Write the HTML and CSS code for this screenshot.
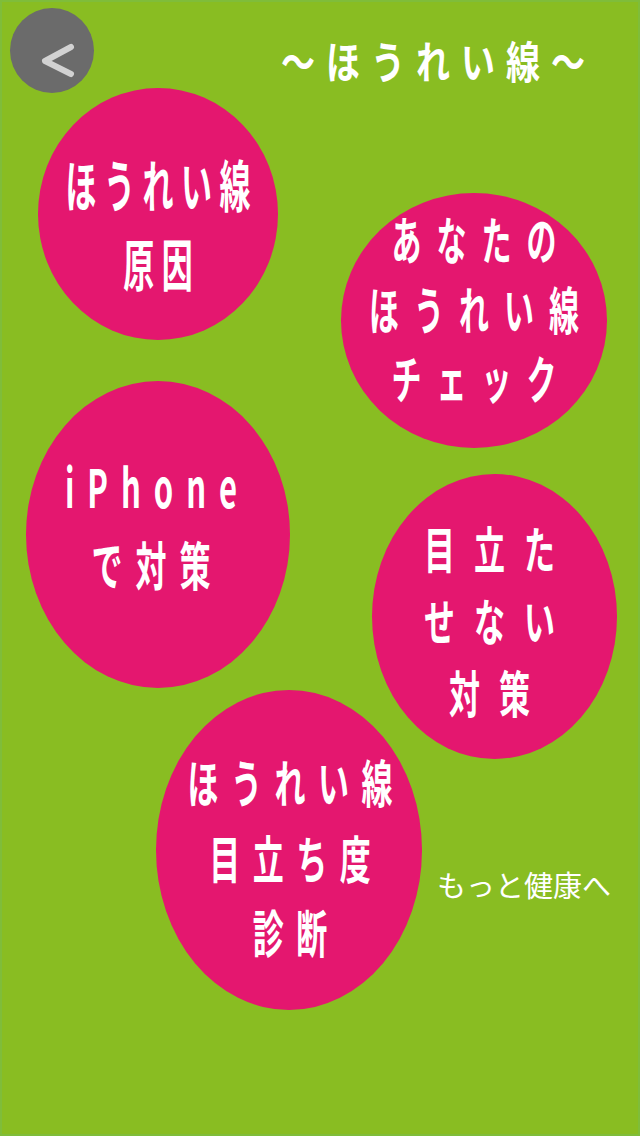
FILE: index.html
```html
<!DOCTYPE html>
<html lang="ja">
<head>
<meta charset="utf-8">
<title>ほうれい線</title>
<link rel="stylesheet" href="styles.css">
</head>
<body>
<div class="screen">
  <header class="header">
    <button class="back" type="button" aria-label="戻る">
      <svg viewBox="0 0 84 85" width="84" height="85">
        <polyline points="61,39 35,53 61,66" fill="none" stroke="#d2d2d2" stroke-width="6" stroke-linecap="round" stroke-linejoin="round"/>
      </svg>
    </button>
    <h1 class="title">～ほうれい線～</h1>
  </header>
  <main class="canvas">
    <a class="bubble b1" href="#"><span class="label">ほうれい線<br>原因</span></a>
    <a class="bubble b2" href="#"><span class="label">あなたの<br>ほうれい線<br>チェック</span></a>
    <a class="bubble b3" href="#"><span class="label">iPhone<br>で対策</span></a>
    <a class="bubble b4" href="#"><span class="label">目立た<br>せない<br>対策</span></a>
    <a class="bubble b5" href="#"><span class="label">ほうれい線<br>目立ち度<br>診断</span></a>
    <a class="more" href="#">もっと健康へ</a>
  </main>
</div>
</body>
</html>
```
FILE: styles.css
```css
html, body {
  margin: 0;
  padding: 0;
}
body {
  width: 640px;
  height: 1136px;
  overflow: hidden;
  background: #89bd22;
  font-family: "Noto Sans CJK JP", "Noto Sans", sans-serif;
  color: #ffffff;
}
.screen {
  width: 640px;
  height: 1136px;
  box-sizing: border-box;
  box-shadow: inset 0 0 0 2px #7fbd3a;
  display: flex;
  flex-direction: column;
}
.header {
  height: 88px;
  display: flex;
  align-items: flex-start;
  flex-shrink: 0;
}
.back {
  width: 84px;
  height: 85px;
  margin: 8px 0 0 10px;
  padding: 0;
  border: none;
  border-radius: 50%;
  background: #6b6b6b;
  display: flex;
  align-items: center;
  justify-content: center;
  position: relative;
  z-index: 2;
}
.back svg {
  display: block;
}
.title {
  margin: 40px 44px 0 auto;
  font-size: 34px;
  font-weight: 700;
  line-height: 42px;
  letter-spacing: 11px;
  transform: scale(1, 1.3);
  white-space: nowrap;
}
.canvas {
  position: relative;
  flex: 1;
}
.bubble {
  position: absolute;
  border-radius: 50%;
  background: #e4176f;
  color: #ffffff;
  text-decoration: none;
  display: flex;
  align-items: center;
  justify-content: center;
}
.label {
  display: block;
  text-align: center;
  white-space: nowrap;
  font-weight: 700;
  font-size: var(--fs);
  line-height: var(--lh);
  letter-spacing: var(--ls);
  padding-left: var(--ls);
  transform: translate(var(--dx), var(--dy)) scale(1, var(--s));
}
.b1 {
  left: 38px; top: 0; width: 240px; height: 252px;
  --fs: 31px; --lh: 44px; --ls: 7.5px; --s: 1.8; --dx: 0px; --dy: 9px;
}
.b2 {
  left: 341px; top: 105px; width: 266px; height: 255px;
  --fs: 30px; --lh: 41px; --ls: 15px; --s: 1.7; --dx: 0px; --dy: -12px;
}
.b3 {
  left: 26px; top: 293px; width: 264px; height: 307px;
  --fs: 31px; --lh: 46px; --ls: 13px; --s: 1.7; --dx: -7px; --dy: -10px;
}
.b4 {
  left: 372px; top: 386px; width: 245px; height: 285px;
  --fs: 31px; --lh: 45px; --ls: 19px; --s: 1.6; --dx: -5px; --dy: 3px;
}
.b5 {
  left: 156px; top: 602px; width: 266px; height: 320px;
  --fs: 31px; --lh: 45.5px; --ls: 12.5px; --s: 1.65; --dx: 1px; --dy: 6px;
}
.more {
  position: absolute;
  left: 437px;
  top: 782px;
  font-size: 29px;
  line-height: 29px;
  font-weight: 400;
  color: #ffffff;
  text-decoration: none;
  white-space: nowrap;
}
```
